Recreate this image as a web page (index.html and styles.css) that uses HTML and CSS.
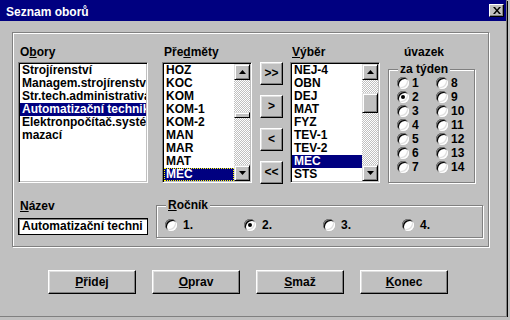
FILE: index.html
```html
<!DOCTYPE html>
<html lang="cs">
<head>
    <meta charset="UTF-8">
    <meta name="viewport" content="width=device-width, initial-scale=1.0">
    <title>Seznam oborů</title>
    <link rel="stylesheet" href="styles.css">
</head>
<body>
    <div class="window">
        <div class="titlebar">
            <span class="title">Seznam oborů</span>
            <button type="button" class="close">
                <svg width="8" height="7" viewBox="0 0 8 7"><path d="M0 0h2l2 2.5L6 0h2L5 3.5 8 7H6L4 4.5 2 7H0l3-3.5z" fill="#000"/></svg>
            </button>
        </div>
        <div class="client">
            <div class="frame">
                <div class="top-row">
                    <div class="col col-obory">
                        <div class="lbl">O<u>b</u>ory</div>
                        <div class="listbox">
                            <div class="items">
                                <div class="item">Strojírenství</div>
                                <div class="item">Managem.strojírenství</div>
                                <div class="item">Str.tech.administrativa</div>
                                <div class="item selected">Automatizační technik</div>
                                <div class="item">Elektronpočítač.systémy</div>
                                <div class="item">mazací</div>
                            </div>
                        </div>
                    </div>

                    <div class="col col-list col-predmety">
                        <div class="lbl">Pře<u>d</u>měty</div>
                        <div class="listbox">
                            <div class="items">
                                <div class="item">HOZ</div>
                                <div class="item">KOC</div>
                                <div class="item">KOM</div>
                                <div class="item">KOM-1</div>
                                <div class="item">KOM-2</div>
                                <div class="item">MAN</div>
                                <div class="item">MAR</div>
                                <div class="item">MAT</div>
                                <div class="item selected focused">MEC</div>
                            </div>
                            <div class="scrollbar">
                                <div class="sb-btn"><svg width="7" height="4" viewBox="0 0 7 4"><path d="M3.5 0L7 4H0z" fill="#000"/></svg></div>
                                <div class="sb-track"><div class="thumb thumb-predmety"></div></div>
                                <div class="sb-btn"><svg width="7" height="4" viewBox="0 0 7 4"><path d="M0 0h7L3.5 4z" fill="#000"/></svg></div>
                            </div>
                        </div>
                    </div>

                    <div class="col col-arrows">
                        <button type="button" class="btn arrow">&gt;&gt;</button>
                        <button type="button" class="btn arrow">&gt;</button>
                        <button type="button" class="btn arrow">&lt;</button>
                        <button type="button" class="btn arrow">&lt;&lt;</button>
                    </div>

                    <div class="col col-list col-vyber">
                        <div class="lbl"><u>V</u>ýběr</div>
                        <div class="listbox">
                            <div class="items">
                                <div class="item">NEJ-4</div>
                                <div class="item">OBN</div>
                                <div class="item">DEJ</div>
                                <div class="item">MAT</div>
                                <div class="item">FYZ</div>
                                <div class="item">TEV-1</div>
                                <div class="item">TEV-2</div>
                                <div class="item selected">MEC</div>
                                <div class="item">STS</div>
                            </div>
                            <div class="scrollbar">
                                <div class="sb-btn"><svg width="7" height="4" viewBox="0 0 7 4"><path d="M3.5 0L7 4H0z" fill="#000"/></svg></div>
                                <div class="sb-track"><div class="thumb thumb-vyber"></div></div>
                                <div class="sb-btn"><svg width="7" height="4" viewBox="0 0 7 4"><path d="M0 0h7L3.5 4z" fill="#000"/></svg></div>
                            </div>
                        </div>
                    </div>

                    <div class="col col-uvazek">
                        <div class="lbl lbl-uvazek">úvazek</div>
                        <fieldset class="group group-tyden">
                            <legend>za týden</legend>
                            <div class="radio-grid">
                                <div class="opt"><span class="radio"></span>1</div>
                                <div class="opt"><span class="radio checked"></span>2</div>
                                <div class="opt"><span class="radio"></span>3</div>
                                <div class="opt"><span class="radio"></span>4</div>
                                <div class="opt"><span class="radio"></span>5</div>
                                <div class="opt"><span class="radio"></span>6</div>
                                <div class="opt"><span class="radio"></span>7</div>
                                <div class="opt"><span class="radio"></span>8</div>
                                <div class="opt"><span class="radio"></span>9</div>
                                <div class="opt"><span class="radio"></span>10</div>
                                <div class="opt"><span class="radio"></span>11</div>
                                <div class="opt"><span class="radio"></span>12</div>
                                <div class="opt"><span class="radio"></span>13</div>
                                <div class="opt"><span class="radio"></span>14</div>
                            </div>
                        </fieldset>
                    </div>
                </div>

                <div class="bottom-row">
                    <div class="col col-nazev">
                        <div class="lbl"><u>N</u>ázev</div>
                        <div class="textbox">Automatizační techni</div>
                    </div>
                    <fieldset class="group group-rocnik">
                        <legend><u>R</u>očník</legend>
                        <div class="rocnik-row">
                            <div class="opt"><span class="radio"></span>1.</div>
                            <div class="opt"><span class="radio checked"></span>2.</div>
                            <div class="opt"><span class="radio"></span>3.</div>
                            <div class="opt"><span class="radio"></span>4.</div>
                        </div>
                    </fieldset>
                </div>
            </div>

            <div class="actions">
                <button type="button" class="btn cmd"><u>P</u>řidej</button>
                <button type="button" class="btn cmd"><u>O</u>prav</button>
                <button type="button" class="btn cmd"><u>S</u>maž</button>
                <button type="button" class="btn cmd"><u>K</u>onec</button>
            </div>
        </div>
    </div>
</body>
</html>
```

FILE: styles.css
```css
* {
    box-sizing: border-box;
}

body {
    margin: 0;
    background-color: #c0c0c0;
    font-family: "Liberation Sans", Arial, sans-serif;
    font-size: 12px;
    font-weight: bold;
    line-height: 13px;
    color: #000;
}

u {
    text-decoration-thickness: 1px;
    text-underline-offset: 1px;
}

.window {
    width: 507px;
    height: 317px;
    border-right: 1px solid #808080;
    border-bottom: 1px solid #808080;
    box-shadow: 1px 1px 0 #000;
}

.titlebar {
    height: 21px;
    background-color: #000080;
    color: #fff;
    display: flex;
    align-items: center;
    justify-content: space-between;
    padding: 3px 2px 0 6px;
}

.close {
    width: 15px;
    height: 13px;
    padding: 0;
    margin-top: -3px;
    display: flex;
    align-items: center;
    justify-content: center;
    background-color: #c0c0c0;
    border: 1px solid;
    border-color: #fff #000 #000 #fff;
    box-shadow: inset -1px -1px 0 #808080;
}

.client {
    padding: 11px 0 0 12px;
}

/* etched group frame */
.frame {
    width: 477px;
    height: 215px;
    border: 1px solid #808080;
    box-shadow: inset 1px 1px 0 #fff, 1px 1px 0 #fff;
    padding: 13px 0 0 5px;
}

.top-row,
.bottom-row {
    display: flex;
    align-items: flex-start;
}

.lbl {
    padding-left: 2px;
    margin-bottom: 3px;
    white-space: nowrap;
}

.col-obory {
    width: 130px;
}

.col-list {
    width: 90px;
}

.col-predmety {
    margin-left: 14px;
}

.col-arrows {
    width: 23px;
    margin-left: 8px;
    padding-top: 16px;
    display: flex;
    flex-direction: column;
    gap: 10px;
}

.col-vyber {
    margin-left: 7px;
}

.col-uvazek {
    width: 87px;
    margin-left: 8px;
}

.lbl-uvazek {
    padding-left: 16px;
    margin-bottom: 4px;
}

/* list boxes */
.listbox {
    height: 121px;
    display: flex;
    background-color: #fff;
    border: 1px solid;
    border-color: #808080 #fff #fff #808080;
    box-shadow: inset 1px 1px 0 #000, inset -1px -1px 0 #c0c0c0;
    padding: 1px;
    overflow: hidden;
}

.items {
    flex: 1;
    min-width: 0;
    overflow: hidden;
}

.item {
    height: 13px;
    padding-left: 2px;
    white-space: nowrap;
    overflow: hidden;
}

.item.selected {
    background-color: #000080;
    color: #fff;
}

.item.focused {
    outline: 1px dotted #ffff00;
    outline-offset: -1px;
}

.scrollbar {
    width: 16px;
    display: flex;
    flex-direction: column;
}

.sb-btn,
.thumb {
    background-color: #c0c0c0;
    border: 1px solid;
    border-color: #dfdfdf #000 #000 #dfdfdf;
    box-shadow: inset 1px 1px 0 #fff, inset -1px -1px 0 #808080;
}

.sb-btn {
    height: 16px;
    display: flex;
    align-items: center;
    justify-content: center;
}

.sb-track {
    flex: 1;
    background: repeating-conic-gradient(#c0c0c0 0% 25%, #fff 0% 50%) 0 0 / 2px 2px;
}

.thumb {
    height: 16px;
}

.thumb-predmety {
    height: 6px;
    margin-top: 32px;
    box-shadow: inset 1px 1px 0 #fff;
}

.thumb-vyber {
    height: 20px;
    margin-top: 13px;
}

/* buttons */
.btn {
    font: inherit;
    color: #000;
    padding: 0;
    background-color: #c0c0c0;
    border: 1px solid;
    border-color: #fff #000 #000 #fff;
    box-shadow: inset -1px -1px 0 #808080, inset 1px 1px 0 #dfdfdf;
}

.arrow {
    height: 23px;
    width: 23px;
}

/* group boxes */
.group {
    margin: 0;
    border: 1px solid #808080;
    box-shadow: inset 1px 1px 0 #fff, 1px 1px 0 #fff;
    min-width: 0;
}

.group legend {
    padding: 0 2px;
    margin-left: 0;
    background-color: #c0c0c0;
    line-height: 13px;
}

.group-tyden {
    padding: 0 0 8px 8px;
}

.group-tyden legend {
    margin-left: 1px;
}

.radio-grid {
    display: grid;
    grid-template-columns: 39px 39px;
    grid-template-rows: repeat(7, 14px);
    grid-auto-flow: column;
}

.opt {
    display: flex;
    align-items: center;
    gap: 3px;
    line-height: 14px;
}

.radio {
    width: 12px;
    height: 12px;
    border-radius: 50%;
    background-color: #fff;
    box-shadow: inset 1px 1px 0 #808080, inset -1px -1px 0 #fff, inset 2px 2px 0 #000, inset -2px -2px 0 #dfdfdf;
    display: flex;
    align-items: center;
    justify-content: center;
}

.radio.checked::after {
    content: "";
    width: 4px;
    height: 4px;
    border-radius: 50%;
    background-color: #000;
}

.bottom-row {
    margin-top: 15px;
}

.col-nazev {
    width: 130px;
    padding-top: 1px;
}

.col-nazev .lbl {
    margin-bottom: 5px;
}

.textbox {
    height: 17px;
    background-color: #fff;
    border: 1px solid #000;
    box-shadow: inset 1px 1px 0 #808080;
    padding: 1px 0 0 3px;
    white-space: nowrap;
    overflow: hidden;
}

.group-rocnik {
    width: 327px;
    margin-left: 8px;
    padding: 6px 0 5px 8px;
}

.group-rocnik legend {
    margin-left: 1px;
}

.rocnik-row {
    display: grid;
    grid-template-columns: repeat(4, 79px);
}

.rocnik-row .opt {
    gap: 6px;
}

.actions {
    display: flex;
    gap: 16px;
    margin: 23px 0 0 36px;
}

.cmd {
    width: 88px;
    height: 24px;
}
```
